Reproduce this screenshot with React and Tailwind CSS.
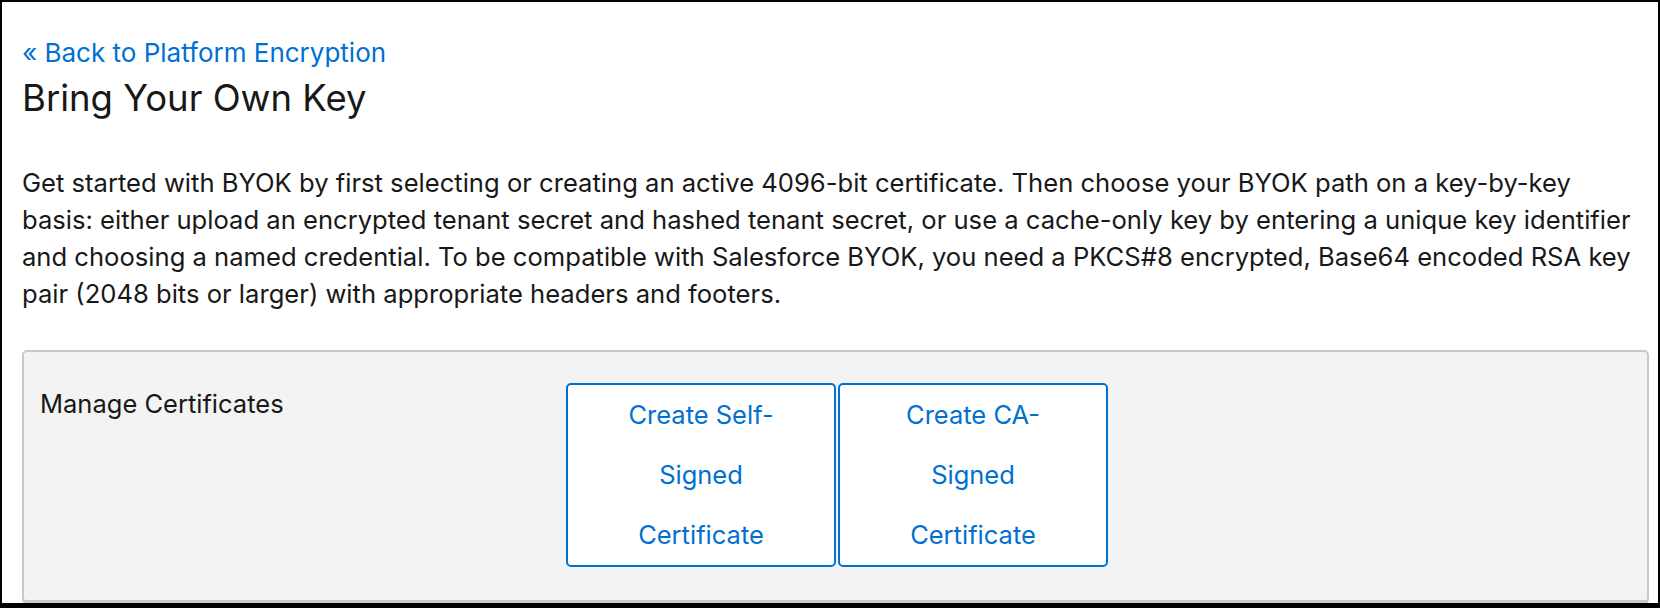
export default function App() {
  return (
    <div className="h-[608px] w-full overflow-hidden border-x-2 border-t-2 border-b-[5px] border-black bg-white font-['Inter',sans-serif] text-[#181818]">
      <div className="pl-[20px] pr-[9px] pt-[32px]">
        <a href="#" className="block text-[26px] leading-[37px] text-[#0070d2]">
          « Back to Platform Encryption
        </a>
        <h1 className="mt-[5px] text-[36.5px] leading-[44px] font-normal">Bring Your Own Key</h1>
        <p className="mt-[44px] pr-[9px] text-[25.6px] leading-[37px]">
          Get started with BYOK by first selecting or creating an active 4096-bit certificate. Then
          choose your BYOK path on a key-by-key basis: either upload an encrypted tenant secret and
          hashed tenant secret, or use a cache-only key by entering a unique key identifier and
          choosing a named credential. To be compatible with Salesforce BYOK, you need a PKCS#8
          encrypted, Base64 encoded RSA key pair (2048 bits or larger) with appropriate headers and
          footers.
        </p>
        <section className="mt-[38px] flex items-start rounded-[5px] border-x-2 border-t-2 border-b-4 border-[#c9c9c9] bg-[#f3f3f3] pb-[33px] pl-[16px] pt-[31px]">
          <div className="w-[526px] shrink-0 pt-[2px] text-[25.5px] leading-[37px]">Manage Certificates</div>
          <div className="flex gap-[2px]">
            <CertButton lines={['Create Self-', 'Signed', 'Certificate']} />
            <CertButton lines={['Create CA-', 'Signed', 'Certificate']} />
          </div>
        </section>
      </div>
    </div>
  )
}

function CertButton({ lines }) {
  return (
    <button className="w-[270px] rounded-[5px] border-2 border-[#0070d2] bg-white px-[16px] text-center text-[25.5px] leading-[60px] text-[#0070d2]">
      {lines.map((line) => (
        <span key={line} className="block">
          {line}
        </span>
      ))}
    </button>
  )
}
